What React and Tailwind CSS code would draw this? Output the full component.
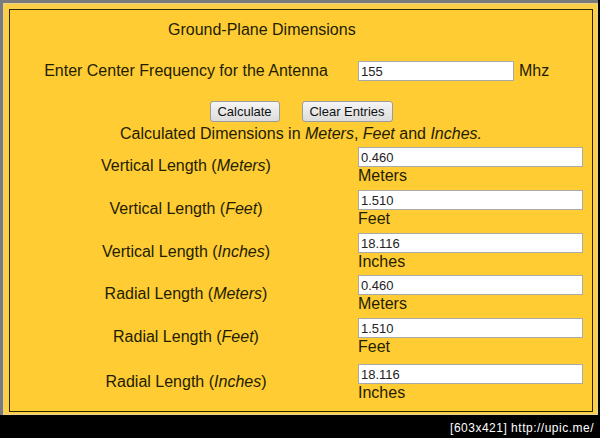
const rows = [
  { label: 'Vertical Length', unit: 'Meters', value: '0.460', mt: 'mt-[4px]' },
  { label: 'Vertical Length', unit: 'Feet', value: '1.510', mt: 'mt-[5px]' },
  { label: 'Vertical Length', unit: 'Inches', value: '18.116', mt: 'mt-[5px]' },
  { label: 'Radial Length', unit: 'Meters', value: '0.460', mt: 'mt-[4px]' },
  { label: 'Radial Length', unit: 'Feet', value: '1.510', mt: 'mt-[5px]' },
  { label: 'Radial Length', unit: 'Inches', value: '18.116', mt: 'mt-[8px]', last: true },
];

function Field({ value, wide }) {
  return (
    <input
      type="text"
      defaultValue={value}
      className={`${wide ? 'w-[225px]' : 'w-[156px]'} h-[20px] border border-[#a9a9a9] bg-white pl-[2px] text-[13px] leading-[18px] text-[#222] font-['Liberation_Sans',Arial,sans-serif] outline-none`}
    />
  );
}

function Btn({ children, w }) {
  return (
    <button
      type="button"
      className={`${w} h-[21px] rounded-[3px] border border-[#9c9c9c] bg-gradient-to-b from-[#f5f5f5] to-[#dcdcdc] text-[13px] leading-none text-[#111] font-['Liberation_Sans',Arial,sans-serif]`}
    >
      {children}
    </button>
  );
}

export default function App() {
  return (
    <div className="w-[600px] h-[438px] bg-black flex flex-col overflow-hidden font-['Liberation_Sans',Arial,sans-serif]">
      <div className="w-[598px] h-[415px] shrink-0 bg-[#7a7a7a] pt-[3px] pl-[3px]">
        <div className="w-[595px] h-[412px] border border-[#e6d28e] bg-[#fbcf48] pt-[5px] pl-[5px] pr-[4px] pb-[2px]">
          <div className="h-full border border-[#2e2600] bg-[#ffcc33]">
            <div className="flex flex-col text-[16px] leading-[18px] text-[#231d00]">
              <div className="mt-[11px] pl-[158px]">Ground-Plane Dimensions</div>

              <div className="mt-[22px] grid grid-cols-[348px_1fr] items-center h-[20px]">
                <div className="text-center pl-[4px]">Enter Center Frequency for the Antenna</div>
                <div className="flex items-center">
                  <Field value="155" />
                  <span className="ml-[5px]">Mhz</span>
                </div>
              </div>

              <div className="mt-[20px] flex justify-center gap-[22px]">
                <Btn w="w-[70px]">Calculate</Btn>
                <Btn w="w-[91px]">Clear Entries</Btn>
              </div>

              <div className="mt-[3px] text-center">
                Calculated Dimensions in <i>Meters</i>, <i>Feet</i> and <i>Inches.</i>
              </div>

              {rows.map((r, i) => (
                <div key={i} className={`${r.mt} grid grid-cols-[348px_1fr] items-center`}>
                  <div className={`text-center pl-[4px] ${r.last ? 'pb-[3px]' : ''}`}>
                    {r.label} (<i>{r.unit}</i>)
                  </div>
                  <div className="flex flex-col">
                    <Field value={r.value} wide />
                    <span>{r.unit}</span>
                  </div>
                </div>
              ))}
            </div>
          </div>
        </div>
      </div>
      <div className="flex-1 flex items-center justify-end pr-[6px] pt-[3px] text-white text-[12px] leading-[14px] tracking-[0.5px]">
        [603x421] http://upic.me/
      </div>
    </div>
  );
}
